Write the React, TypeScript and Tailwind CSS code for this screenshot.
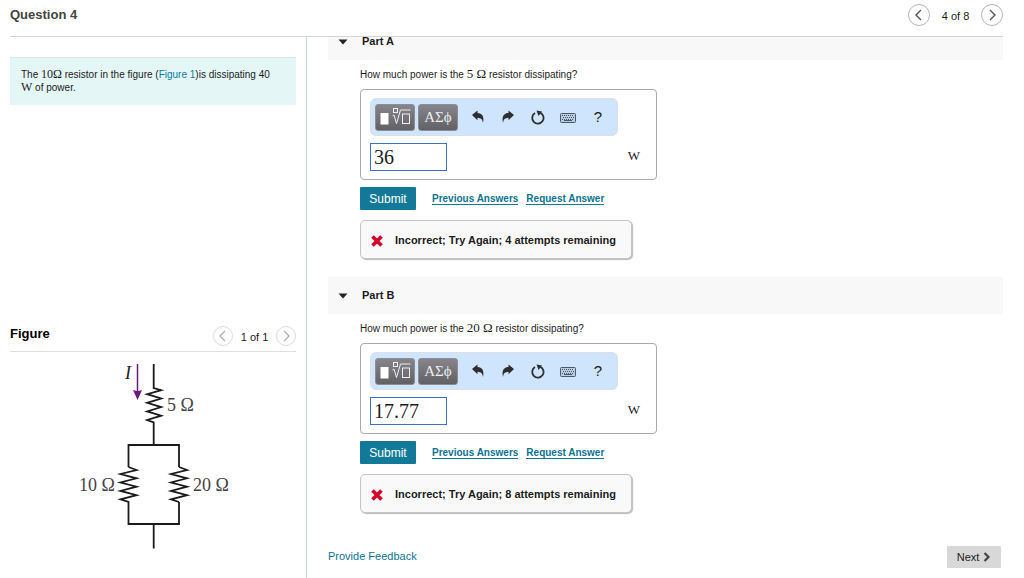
import React, { useState } from 'react';

interface PartProps {
  id: string;
  title: string;
  resistance: string;
  answer: string;
  attempts: number;
}

interface PagerProps {
  label: string;
  text: string;
  size: 'sm' | 'md';
}

const Chevron: React.FC<{ direction: 'left' | 'right' }> = ({ direction }) => (
  <svg viewBox="0 0 12 12" className="w-3 h-3" fill="none" stroke="currentColor" strokeWidth="1.4">
    <path d={direction === 'left' ? 'M8 1 3 6l5 5' : 'M4 1l5 5-5 5'} />
  </svg>
);

const Pager: React.FC<PagerProps> = ({ label, text, size }) => {
  const circle =
    size === 'md'
      ? 'flex w-[22px] h-[22px] items-center justify-center rounded-full border border-[#b5b5b5] text-[#555]'
      : 'flex w-5 h-5 items-center justify-center rounded-full border border-[#dcdcdc] text-[#b0b0b0]';

  return (
    <nav aria-label={label} className="flex items-center">
      <button aria-label="Previous" className={circle}>
        <Chevron direction="left" />
      </button>
      <span className={size === 'md' ? 'w-[51px] pt-0.5 text-center' : 'w-[43px] pt-0.5 text-center'}>
        {text}
      </span>
      <button aria-label="Next" className={circle}>
        <Chevron direction="right" />
      </button>
    </nav>
  );
};

const TemplatesIcon = () => (
  <svg viewBox="0 0 34 20" className="w-[34px] h-5" fill="none" stroke="#f0f0f0">
    <rect x="2.5" y="6" width="8" height="11.500" fill="#fff" stroke="none" />
    <rect x="15.5" y="1.5" width="4" height="4" />
    <path d="M14.500 9l1.500-1 2.500 8.500 4-13.500h10" />
    <rect x="24.500" y="7" width="7" height="9.500" />
  </svg>
);

const UndoIcon = () => (
  <svg viewBox="0 0 14 14" className="w-3.5 h-3.5" fill="#2e2e2e">
    <path d="M1 5 6.500 0.500V3C11 3 13.500 6.500 12 13 11.500 9.500 10 8 6.500 7.800v2.400z" />
  </svg>
);

const RedoIcon = () => (
  <svg viewBox="0 0 14 14" className="w-3.5 h-3.5" fill="#2e2e2e">
    <path d="M13 5 7.500 0.500V3C3 3 0.500 6.500 2 13 2.500 9.500 4 8 7.500 7.800v2.400z" />
  </svg>
);

const ResetIcon = () => (
  <svg viewBox="0 0 16 16" className="w-4 h-4" fill="none" stroke="#2e2e2e" strokeWidth="1.8">
    <path d="M10 3.600A5.700 5.700 0 1 1 5 4" />
    <path d="M6.500 1.500 12 2.600 8.500 7z" fill="#2e2e2e" stroke="none" />
  </svg>
);

const KeyboardIcon = () => (
  <svg viewBox="0 0 16 14" className="w-4 h-3.5" fill="none" stroke="#4a5a6a">
    <rect x="0.500" y="3.500" width="15" height="9" rx="1" fill="#b9cde2" />
    <path d="M2 5.500h12M3 7.500h11M2 9.500h12" strokeDasharray="1 1" />
    <path d="M4 10.500h8" />
  </svg>
);

const WrongIcon = () => (
  <svg viewBox="0 0 12 12" className="w-3 h-3" stroke="#d6002a" strokeWidth="3.600">
    <path d="M1.500 1.500l9 9M10.500 1.500l-9 9" />
  </svg>
);

const Circuit = () => (
  <svg
    viewBox="68 352 170 226"
    className="mx-auto block w-[170px] h-[226px]"
    role="img"
    aria-label="Circuit diagram"
  >
    <g fill="none" stroke="#1a1a1a" strokeWidth="1.800">
      <path d="M153.700 364v24l7.500 2.200-14 4 14 4.300-14 4.300 14 4.300-14 4.300 14 4.300-14 4.300 6.500 2.300V445" />
      <path d="M128.500 467V445H179v22" />
      <path d="M128.500 467l8 3-16 4 16 4.300-16 4.200 16 4.200-16 4.200 16 4.300-16 4.200 8 2.600V524H179V502" />
      <path d="M179 467l8 3-16 4 16 4.300-16 4.200 16 4.200-16 4.200 16 4.300-16 4.200 8 2.600" />
      <path d="M153.700 524v24.500" />
    </g>
    <path d="M137.500 364v28" stroke="#6b1a7d" strokeWidth="1.500" />
    <path d="M133 390l4.500 1.200 4.500-1.200-4.500 10z" fill="#6b1a7d" />
    <g fill="#444" fontFamily="Liberation Serif, serif" fontSize="18">
      <text x="125" y="379" fontStyle="italic" fill="#222">I</text>
      <text x="167" y="411">5 Ω</text>
      <text x="79" y="491">10 Ω</text>
      <text x="193" y="491">20 Ω</text>
    </g>
  </svg>
);

const Part: React.FC<PartProps> = ({ id, title, resistance, answer, attempts }) => {
  const [value, setValue] = useState(answer);
  const [open, setOpen] = useState(true);
  const keyClass =
    'flex w-10 h-[27px] items-center justify-center rounded-[3px] border border-[#8c8c92] bg-linear-to-b from-[#85858b] to-[#616165] text-[#eee]';
  const toolClass = 'flex w-[30px] items-center justify-center';

  return (
    <section className="pb-[18px]">
      <h2 className="bg-[#f8f8f8] font-bold">
        <button
          className="flex w-full h-[37px] items-center gap-3.5 pl-2.5"
          aria-expanded={open}
          onClick={() => setOpen(!open)}
        >
          <svg viewBox="0 0 10 6" className="w-2.5 h-1.5" fill="#222">
            <path d="M0.500 0.500h9L5 5.500z" />
          </svg>
          {title}
        </button>
      </h2>

      {open && (
        <div className="px-8 pt-1.5">
          <label htmlFor={id} className="block h-[23px] text-[10px] leading-4">
            How much power is the <span className="font-['Liberation_Serif',serif] text-[13px]">{resistance} Ω</span>{' '}
            resistor dissipating?
          </label>

          <div className="w-[297px] h-[91px] rounded border border-[#aaa] px-[9px] py-2">
            <div className="flex w-[248px] h-[38px] items-center rounded-md border border-[#dcdfe3] bg-[#cfe5fe] pl-1">
              <button aria-label="Templates" className={keyClass}>
                <TemplatesIcon />
              </button>
              <button
                aria-label="Symbols"
                className={`${keyClass} ml-[3px] mr-[5px] font-['Liberation_Serif',serif] text-[15px]`}
              >
                ΑΣϕ
              </button>
              <button aria-label="Undo" className={toolClass}><UndoIcon /></button>
              <button aria-label="Redo" className={toolClass}><RedoIcon /></button>
              <button aria-label="Reset" className={toolClass}><ResetIcon /></button>
              <button aria-label="Keyboard shortcuts" className={toolClass}><KeyboardIcon /></button>
              <button aria-label="Help" className={`${toolClass} text-[15px]`}>?</button>
            </div>
            <div className="mt-[7px] flex items-center justify-between pr-[7px]">
              <input
                id={id}
                value={value}
                onChange={e => setValue(e.target.value)}
                className="w-[77px] h-7 border border-[#3a6fd0] px-[3px] font-['Liberation_Serif',serif] text-xl outline-none"
              />
              <span className="pb-0.5 font-['Liberation_Serif',serif] text-[13px]">W</span>
            </div>
          </div>

          <div className="mt-[7px] flex h-[23px] items-center">
            <button className="mr-4 w-14 h-[23px] rounded-[1px] bg-[#127a98] text-xs text-white">Submit</button>
            <a href="#previous" className="mr-2 border-b border-[#127a98] text-[10px] leading-[11px] font-bold text-[#0b7391]">
              Previous Answers
            </a>
            <a href="#request" className="border-b border-[#127a98] text-[10px] leading-[11px] font-bold text-[#0b7391]">
              Request Answer
            </a>
          </div>

          <p className="mt-2.5 flex w-[272px] h-[39px] items-center gap-3 rounded-[5px] border border-[#c4c4c4] bg-[#f9f9f9] pt-0.5 pl-2.5 font-bold shadow-[1px_1px_1px_#bbb]">
            <WrongIcon />
            Incorrect; Try Again; {attempts} attempts remaining
          </p>
        </div>
      )}
    </section>
  );
};

const App: React.FC = () => {
  return (
    <div className="flex h-screen flex-col overflow-hidden bg-white font-['Liberation_Sans',Arial,sans-serif] text-[11px] text-[#1c1c1c]">
      <header className="ml-2.5 mr-[21px] flex h-[37px] shrink-0 items-start justify-between border-b border-[#d5d5d5]">
        <h1 className="pt-[7px] text-[13px] leading-4 font-bold text-[#444]">Question 4</h1>
        <div className="pt-1">
          <Pager label="Question" text="4 of 8" size="md" />
        </div>
      </header>

      <main className="flex min-h-0 flex-1">
        <aside className="flex w-[307px] shrink-0 flex-col border-r border-[#c3d3e0] pl-2.5 pr-2.5">
          <div className="mt-5 h-12 border-t border-[#d8e6e6] bg-[#e5f6f6] pt-2.5 pr-5 pl-[11px] text-[10px] leading-[13px]">
            The <span className="font-['Liberation_Serif',serif] text-xs leading-[13px]">10Ω</span> resistor in the figure (
            <a href="#figure" className="text-[#0b7ba3]">Figure 1</a>)is dissipating 40{' '}
            <span className="font-['Liberation_Serif',serif] text-xs leading-[13px]">W</span> of power.
          </div>

          <section id="figure" className="mt-auto">
            <div className="flex h-[30px] items-start justify-between border-b border-[#e0e0e0] pt-1">
              <h2 className="text-[13px] leading-4 font-bold text-black">Figure</h2>
              <Pager label="Figure" text="1 of 1" size="sm" />
            </div>
            <Circuit />
          </section>
        </aside>

        <div className="flex min-w-0 flex-1 flex-col overflow-hidden pl-[21px] pr-[21px]">
          <div className="-mt-3.5">
            <Part id="part-a" title="Part A" resistance="5" answer="36" attempts={4} />
            <Part id="part-b" title="Part B" resistance="20" answer="17.77" attempts={8} />
          </div>
          <footer className="mt-[15px] flex items-center justify-between pr-0.5">
            <a href="#feedback" className="pb-0.5 text-[11px] text-[#0b7391]">Provide Feedback</a>
            <button className="flex h-[22px] w-[54px] items-center justify-center gap-1 rounded-[1px] bg-[#d8d8d8] text-[11px]">
              Next
              <svg viewBox="0 0 8 10" className="w-2 h-2.5" fill="none" stroke="#444" strokeWidth="2.200">
                <path d="M1.500 1l4 4-4 4" />
              </svg>
            </button>
          </footer>
        </div>
      </main>
    </div>
  );
};

export default App;
